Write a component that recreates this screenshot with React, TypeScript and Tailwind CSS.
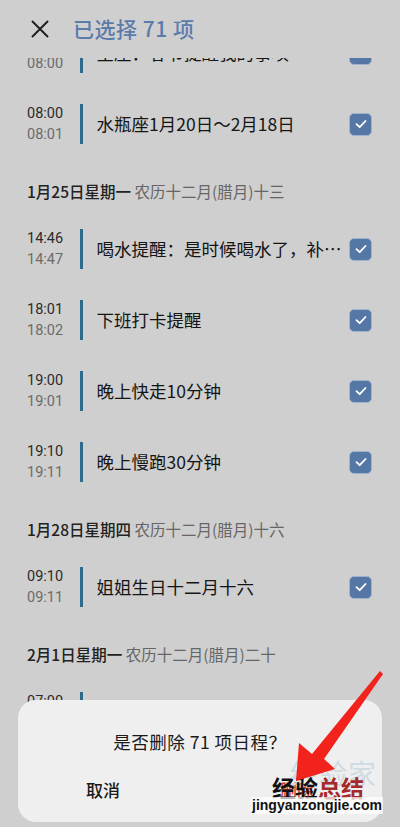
import React from "react";

type Row = { t1: string; t2: string; title: string };

const Check = () => (
  <div className="w-[23px] h-[23px] rounded-[5px] bg-[#5577a6] border-[1.5px] border-[#9fb3cf] flex items-center justify-center shrink-0">
    <svg width="14" height="14" viewBox="0 0 14 14" fill="none">
      <path d="M2.5 7.2 L5.7 10.2 L11.5 4" stroke="white" strokeWidth="1.8" strokeLinecap="round" strokeLinejoin="round" />
    </svg>
  </div>
);

const ItemRow = ({ r }: { r: Row }) => (
  <div className="h-[71px] flex items-center pl-[27px] pr-[28px]">
    <div className="w-[45px] flex flex-col text-[14.5px] leading-[21px] font-['Roboto','Noto_Sans',sans-serif]">
      <span className="text-[#2b2b2b]">{r.t1}</span>
      <span className="text-[#6b6b6b]">{r.t2}</span>
    </div>
    <div className="w-[2.5px] h-[40px] bg-[#2d6a8b] ml-[8px] shrink-0" />
    <div className="flex-1 min-w-0 ml-[14px] mr-[6px] text-[17.5px] text-[#151515] truncate">{r.title}</div>
    <Check />
  </div>
);

const DateHeader = ({ d, l }: { d: string; l: string }) => (
  <div className="h-[54px] pt-[19px] pl-[27px] text-[15.5px] leading-[24px]">
    <span className="text-[#222] font-medium">{d}</span>
    <span className="text-[#666]"> {l}</span>
  </div>
);

export default function App() {
  return (
    <div className="relative w-[400px] h-[827px] overflow-hidden bg-[#cfcfcf] font-['Noto_Sans_CJK_SC','Noto_Sans',sans-serif]">
      {/* list */}
      <div className="flex flex-col pt-[17.5px]">
        <ItemRow r={{ t1: "07:59", t2: "08:00", title: "星座：春节提醒我的事项" }} />
        <ItemRow r={{ t1: "08:00", t2: "08:01", title: "水瓶座1月20日～2月18日" }} />
        <DateHeader d="1月25日星期一" l="农历十二月(腊月)十三" />
        <ItemRow r={{ t1: "14:46", t2: "14:47", title: "喝水提醒：是时候喝水了，补充水分" }} />
        <ItemRow r={{ t1: "18:01", t2: "18:02", title: "下班打卡提醒" }} />
        <ItemRow r={{ t1: "19:00", t2: "19:01", title: "晚上快走10分钟" }} />
        <ItemRow r={{ t1: "19:10", t2: "19:11", title: "晚上慢跑30分钟" }} />
        <DateHeader d="1月28日星期四" l="农历十二月(腊月)十六" />
        <ItemRow r={{ t1: "09:10", t2: "09:11", title: "姐姐生日十二月十六" }} />
        <DateHeader d="2月1日星期一" l="农历十二月(腊月)二十" />
        <ItemRow r={{ t1: "07:00", t2: "07:01", title: "早起打卡" }} />
        <ItemRow r={{ t1: "08:00", t2: "08:01", title: "删除" }} />
      </div>

      {/* header */}
      <div className="absolute top-0 left-0 right-0 h-[58px] bg-[#cfcfcf] flex items-center">
        <svg className="ml-[31px]" width="18" height="18" viewBox="0 0 18 18">
          <path d="M1.5 1.5 L16.5 16.5 M16.5 1.5 L1.5 16.5" stroke="#1e1e1e" strokeWidth="1.9" strokeLinecap="round" />
        </svg>
        <span className="ml-[24px] text-[21px] font-medium text-[#5b7bab] tracking-[0.5px]">已选择 71 项</span>
      </div>

      {/* dialog */}
      <div className="absolute left-[18px] top-[700px] w-[364px] h-[122px] rounded-[18px] bg-[#efefef] flex flex-col">
        <div className="pt-[29px] text-center text-[17.5px] text-[#1a1a1a] tracking-[0.5px]">是否删除 71 项日程？</div>
        <div className="flex mt-[22px]">
          <div className="w-1/2 pr-[12px] text-center text-[17px] font-medium text-[#1a1a1a]">取消</div>
          <div className="w-1/2 pl-[12px] text-center text-[17px] font-medium text-[#d23b33]">删除</div>
        </div>
      </div>

      {/* watermark */}
      <div className="absolute left-[290px] top-[758px] text-[28px] leading-[30px] text-[#cfdbe3] tracking-[1px]">经验家</div>
      <div className="absolute left-[272px] top-[774px] text-[23px] leading-[26px] font-bold">
        <span className="text-[#111]">经验</span>
        <span className="text-[#a52a2c]">总结</span>
      </div>
      <div className="absolute left-[251px] top-[797px] bg-white/70 px-[1px] text-[14px] leading-[17px] font-bold text-[#111] font-['Liberation_Sans',sans-serif]">
        jingyanzongjie.com
      </div>

      {/* arrow */}
      <svg className="absolute left-0 top-0 pointer-events-none" width="400" height="827" viewBox="0 0 400 827">
        <polygon points="380,671 383,674 324,759 335,769 296,781 299,743 312,754" fill="#f2231d" />
      </svg>
    </div>
  );
}
